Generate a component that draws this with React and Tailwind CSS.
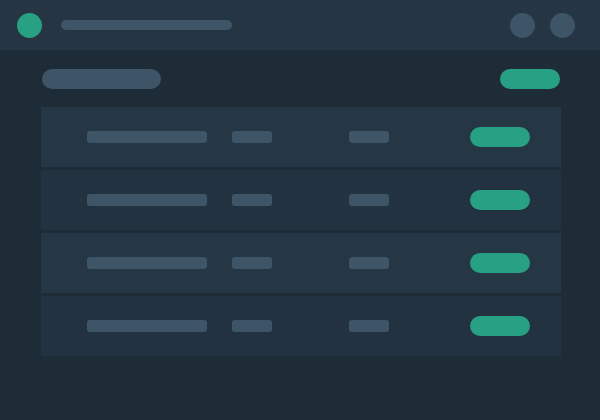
const ROWS = [0, 1, 2, 3]

function Row({ odd }) {
  return (
    <div className={`flex h-[60px] items-center ${odd ? 'bg-[#253644]' : 'bg-[#223240]'}`}>
      <div className="ml-[46px] h-[12px] w-[120px] rounded-[3px] bg-[#3d5566]" />
      <div className="ml-[25px] h-[12px] w-[40px] rounded-[3px] bg-[#3d5566]" />
      <div className="ml-[77px] h-[12px] w-[40px] rounded-[3px] bg-[#3d5566]" />
      <div className="ml-[81px] h-[20px] w-[60px] rounded-full bg-[#27a083]" />
    </div>
  )
}

export default function App() {
  return (
    <div className="flex h-[420px] w-[600px] flex-col bg-[#1e2c37]">
      <header className="flex h-[50px] shrink-0 items-center bg-[#263543] pl-[17px] pr-[25px]">
        <div className="h-[25px] w-[25px] rounded-full bg-[#27a083]" />
        <div className="ml-[19px] h-[10px] w-[171px] rounded-full bg-[#3d5566]" />
        <div className="ml-auto flex gap-[15px]">
          <div className="h-[25px] w-[25px] rounded-full bg-[#3d5566]" />
          <div className="h-[25px] w-[25px] rounded-full bg-[#3d5566]" />
        </div>
      </header>
      <main className="flex flex-col pl-[41px] pt-[19px]">
        <div className="flex w-[519px] items-center justify-between pl-px">
          <div className="h-[20px] w-[119px] rounded-full bg-[#3d5566]" />
          <div className="h-[20px] w-[60px] rounded-full bg-[#27a083]" />
        </div>
        <div className="mt-[18px] flex w-[520px] flex-col gap-[3px]">
          {ROWS.map((i) => (
            <Row key={i} odd={i % 2 === 0} />
          ))}
        </div>
      </main>
    </div>
  )
}
